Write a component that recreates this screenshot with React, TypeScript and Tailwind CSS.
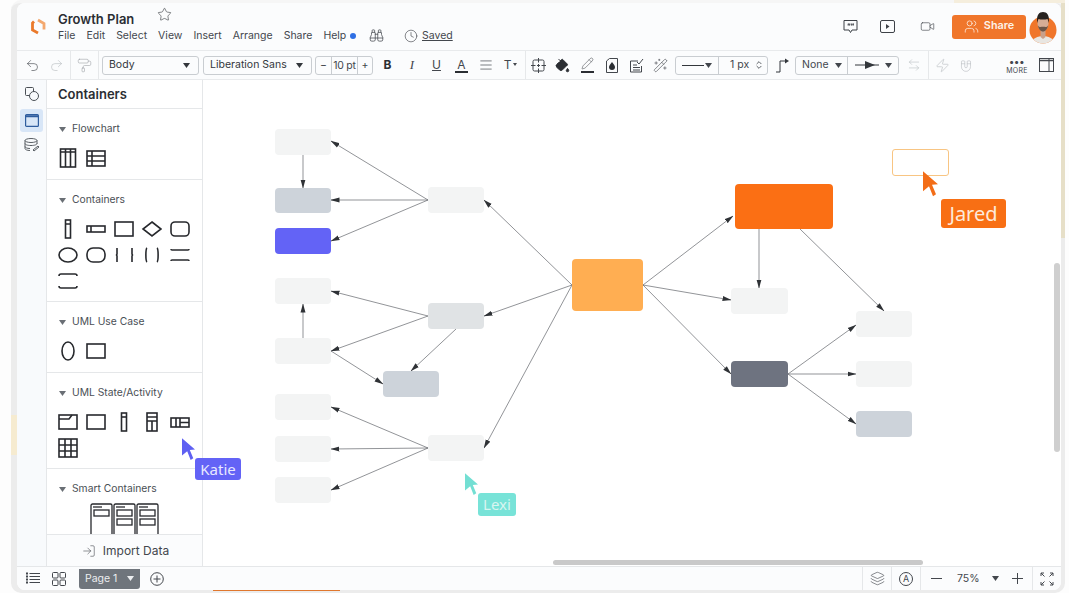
import React from "react";
import {
  Binoculars, Clock, Star, Undo2, Redo2, PaintRoller, AlignJustify, PaintBucket, Pencil, WandSparkles,
  Video, Users, Zap, Magnet, ArrowLeftRight, Layers, ChevronsUpDown, LogIn,
} from "lucide-react";

const Caret = ({ className = "" }: { className?: string }) => (
  <svg width="7" height="5" viewBox="0 0 7 5" className={className}><path d="M0 0h7L3.500 5z" fill="currentColor" /></svg>
);

const S = ({ children }: { children: React.ReactNode }) => (
  <svg width="24" height="24" viewBox="0 0 24 24" fill="none" stroke="#27292d" strokeWidth="1.600">{children}</svg>
);

const shapes: Record<string, React.ReactNode> = {
  swim: <><rect x="4.500" y="3" width="15" height="18" /><path d="M4.500 6h15M9.500 3v18M14.500 3v18" /></>,
  swimH: <><rect x="3" y="5" width="18" height="15" /><path d="M3 10h18M3 15h18M8 5v15" /></>,
  tall: <><rect x="9.500" y="3" width="5" height="18" /><path d="M9.500 7h5" /></>,
  wide: <><rect x="3" y="9" width="18" height="6" /><path d="M7 9v6" /></>,
  rect: <rect x="3" y="5" width="18" height="14" />,
  diamond: <path d="M12 5l9 7-9 7-9-7z" />,
  round: <rect x="3" y="5" width="18" height="14" rx="4" />,
  oval: <ellipse cx="12" cy="12" rx="9" ry="7" />,
  pill: <rect x="3" y="5" width="18" height="14" rx="6" />,
  brk: <path d="M5 5v6l-.500 1 .500 1v6M20 5v6l.500 1-.500 1v6" />,
  paren: <path d="M7 5c-1.500 1-1.500 13 0 14M17 5c1.500 1 1.500 13 0 14" />,
  hbar: <path d="M3 6c0 1 0 1 1 1h16c1 0 1 0 1-1M3 18c0-1 0-1 1-1h16c1 0 1 0 1 1" />,
  hcurve: <path d="M3 7c0-2 1-2 2-2h14c1 0 2 0 2 2M3 17c0 2 1 2 2 2h14c1 0 2 0 2-2" />,
  ellipseV: <ellipse cx="12" cy="12" rx="6" ry="9" />,
  frame: <><rect x="3" y="5" width="18" height="14" /><path d="M3 9h10l3-4" /></>,
  tallT: <><rect x="7" y="3" width="10" height="18" /><path d="M7 7h10M7 11h10M12 11v10" /></>,
  wideT: <><rect x="3" y="8" width="18" height="9" /><path d="M8 8v9M12 8v9M12 12.500h9" /></>,
  grid: <><rect x="3" y="3" width="18" height="18" /><path d="M3 9h18M3 15h18M9 3v18M15 3v18" /></>,
};

const Section = ({ title, icons, h }: { title: string; icons?: string[]; h: string }) => (
  <div className={`${h} shrink-0 border-b border-[#e5e7e9] pl-[10px] pt-[13px]`}>
    <div className="flex h-[14px] items-center gap-[6px] pl-[2px] text-[10.300px] text-[#4a4f55]">
      <Caret className="text-[#6a6f75]" />
      <span>{title}</span>
    </div>
    {icons && (
      <div className="-ml-[3px] mt-[9px] grid auto-rows-[26px] grid-cols-[repeat(5,28px)] place-items-center">
        {icons.map((k, i) => <S key={i}>{shapes[k]}</S>)}
      </div>
    )}
  </div>
);

const Sel = ({ w, children }: { w: string; children: React.ReactNode }) => (
  <div className={`${w} flex h-[19px] items-center justify-between rounded-[3px] border border-[#c9cdd1] pl-[6px] pr-[8px] text-[10.500px] text-[#33373c]`}>
    {children}
  </div>
);

const Vr = () => <div className="h-full w-px bg-[#e6e8ea]" />;

const nodes: [number, number, number, number, string][] = [
  [275, 129, 56, 26, "#f3f4f4"], [275, 188, 56, 25, "#cdd3da"], [275, 228, 56, 26, "#6363f6"],
  [428, 187, 56, 26, "#f3f4f4"], [275, 278, 56, 26, "#f3f4f4"], [275, 338, 56, 26, "#f3f4f4"],
  [428, 303, 56, 26, "#e0e3e5"], [383, 371, 56, 26, "#cdd3da"], [275, 394, 56, 26, "#f3f4f4"],
  [275, 436, 56, 26, "#f3f4f4"], [275, 477, 56, 26, "#f3f4f4"], [428, 435, 56, 26, "#f3f4f4"],
  [572, 259, 71, 52, "#ffae52"], [735, 184, 98, 45, "#fb6f14"], [731, 288, 57, 26, "#f3f4f4"],
  [731, 361, 57, 26, "#6e7380"], [856, 311, 56, 26, "#f3f4f4"], [856, 361, 56, 26, "#f3f4f4"],
  [856, 411, 56, 26, "#cdd3da"],
];

const edges = [
  [572, 285, 484, 200], [572, 285, 484, 316], [572, 285, 484, 448],
  [428, 200, 331, 141], [428, 200, 331, 200], [428, 200, 331, 241],
  [303, 155, 303, 188], [428, 316, 331, 291], [428, 316, 331, 351], [456, 329, 411, 371],
  [303, 338, 303, 304], [331, 351, 383, 384],
  [428, 448, 331, 407], [428, 448, 331, 449], [428, 448, 331, 490],
  [643, 285, 733, 216], [643, 285, 731, 300], [643, 285, 731, 374],
  [759, 229, 759, 288], [800, 229, 884, 311],
  [788, 374, 856, 325], [788, 374, 856, 374], [788, 374, 856, 424],
];

const Cursor = ({ color, x, y, w = 13 }: { color: string; x: number; y: number; w?: number }) => (
  <svg className="absolute" style={{ left: x - 203, top: y - 80 }} width={w} height={w * 1.7} viewBox="0 0 15 25">
    <path d="M0 0l15 13-6 .500 4 9.500-3 2-4-10-6 5z" fill={color} />
  </svg>
);

export default function App() {
  return (
    <div className="relative h-[593px] w-[1069px] overflow-hidden bg-[#fdfdfd] font-['Inter',sans-serif]">
      <div className="ml-[11px] h-[593px] w-[1054px] rounded-[10px] border-t-[3px] border-[#f6f6f6] bg-[#ececec] pb-[3px] pl-[6px] pr-[4px]">
        <div className="relative z-10 flex h-[587px] w-[1044px] flex-col overflow-hidden rounded-[8px] bg-white">
          {/* header */}
          <div className="flex h-[47px] shrink-0 items-center bg-[#fbfcfd] pr-[3px]">
            <svg width="17" height="17" viewBox="0 0 17 17" className="ml-[13px]" fill="none" strokeWidth="2.800">
              <path d="M4 3.500L2.500 5v7l5.500 3" stroke="#ea7a2c" /><path d="M8 2l6 3.500v6" stroke="#f3a86e" />
            </svg>
            <div className="ml-[11px] w-[239px]">
              <div className="flex items-start text-[13px] font-semibold leading-[16px] text-[#2b2e33]">
                Growth Plan
                <Star size={15} strokeWidth={1} className="-mt-[4px] ml-[23px] text-[#3a3d42]" />
              </div>
              <div className="mt-[2px] flex items-center gap-[11px] text-[10.500px] leading-[14px] text-[#43474d]">
                {["File", "Edit", "Select", "View", "Insert", "Arrange", "Share"].map((t) => <span key={t}>{t}</span>)}
                <span className="flex items-center gap-[4px]">Help<span className="h-[6px] w-[6px] rounded-full bg-[#2f6fe4]" /></span>
              </div>
            </div>
            <div className="ml-[72px] mt-[18px] flex items-center text-[#43474d]">
              <Binoculars size={15} strokeWidth={1.200} />
              <Clock size={14} strokeWidth={1.100} className="ml-[20px]" />
              <span className="ml-[4px] text-[10.500px] underline">Saved</span>
            </div>
            <div className="ml-auto flex items-center">
              <svg width="15" height="15" viewBox="0 0 15 15" fill="none" stroke="#3d4147"><path d="M1 1.500h13v9.500H9l-1.500 2.500L6 11H1z" strokeLinejoin="round" /><path d="M5.500 4.500l-.500 2M7 4.500l-.500 2M9 4.500l-.500 2M10.500 4.500l-.500 2" strokeWidth="1.100" /></svg>
              <svg width="15" height="13" viewBox="0 0 15 13" className="ml-[22px]" fill="none" stroke="#3d4147"><rect x="0.500" y="0.500" width="14" height="12" rx="1.500" /><path d="M6 4l3.500 2.500L6 9z" fill="#3d4147" stroke="none" /></svg>
              <Video size={15} strokeWidth={1} className="ml-[25px] text-[#3d4147]" />
              <div className="ml-[17px] flex h-[24px] w-[74px] items-center justify-center gap-[5px] rounded-[3px] bg-[#f0762b] text-[10.800px] font-semibold text-[#fdf3ea]">
                <Users size={15} strokeWidth={1.200} />Share
              </div>
              <svg width="30" height="38" viewBox="0 0 30 38" className="ml-[2px]">
                <defs><clipPath id="av"><circle cx="15" cy="22" r="13.500" /></clipPath></defs>
                <circle cx="15" cy="22" r="13.500" fill="#f0762b" />
                <path clipPath="url(#av)" d="M1 38c1-7 9-10 14-10s13 3 14 10z" fill="#e8e6e2" />
                <path d="M12.500 22h5v7l-2.500 2-2.500-2z" fill="#c9a08a" />
                <ellipse cx="15" cy="15.500" rx="5.500" ry="7.500" fill="#d6ad96" />
                <path d="M9.300 15c-1.300-8 2-11 5.700-11s7 3 5.700 11l-1-4c-3 .700-6.500.700-9.400 0z" fill="#26221f" />
                <path d="M9.800 17c.700 4 2.700 6.500 5.200 6.500s4.500-2.500 5.200-6.500c-.500 1.500-1.500 2-2.500 2-1.500-.500-3.900-.500-5.400 0-1 0-2-.500-2.500-2z" fill="#6b5548" />
              </svg>
            </div>
          </div>
          {/* toolbar */}
          <div className="flex h-[30px] shrink-0 items-center border-y border-[#e8eaec] bg-[#fbfcfd] text-[#43474d]">
            <div className="flex h-full w-[54px] items-center justify-center gap-[9px] border-r border-[#e6e8ea] pl-[2px]">
              <Undo2 size={15} strokeWidth={1} /><Redo2 size={15} strokeWidth={1} className="text-[#b9bdc1]" />
            </div>
            <div className="flex h-full w-[27px] items-center justify-center"><PaintRoller size={15} strokeWidth={1} className="text-[#a3a7ab]" /></div>
            <Vr />
            <Sel w="ml-[3px] w-[97px]"><span>Body</span><Caret /></Sel>
            <Sel w="ml-[4px] w-[109px]"><span>Liberation Sans</span><Caret /></Sel>
            <div className="ml-[3px] flex h-[19px] w-[58px] items-center rounded-[3px] border border-[#c9cdd1] text-[10.500px]">
              <span className="w-[15px] text-center">−</span>
              <span className="flex-1 border-x border-[#c9cdd1] text-center leading-[17px] tracking-tight">10 pt</span>
              <span className="w-[14px] text-center">+</span>
            </div>
            <div className="ml-[2px] flex items-center">
              <span className="flex w-[25px] justify-center text-[12px] font-bold text-[#2b2e33]">B</span>
              <span className="flex w-[24px] justify-center font-['Liberation_Serif',serif] text-[13px] italic">I</span>
              <span className="flex w-[25px] justify-center text-[12px] underline">U</span>
              <span className="flex w-[25px] flex-col items-center text-[12px] leading-[13px]">A<span className="h-[2px] w-[13px] bg-[#2b2e33]" /></span>
              <span className="flex w-[24px] justify-center"><AlignJustify size={14} strokeWidth={1.200} /></span>
              <span className="flex w-[25px] items-center justify-center gap-[2px] text-[12px]">T<Caret className="mt-[-2px] w-[4px]" /></span>
            </div>
            <div className="ml-[2px] h-full"><Vr /></div>
            <div className="flex items-center">
              <span className="flex w-[24px] justify-center">
                <svg width="15" height="15" viewBox="0 0 15 15" fill="none" stroke="#43474d" strokeWidth="1"><rect x="2" y="2" width="11" height="11" rx="1.500" /><path d="M7.500 0v4.500M7.500 10.500V15M0 7.500h4.500M10.500 7.500H15M6 7.500h3M7.500 6v3" /></svg>
              </span>
              <span className="flex w-[25px] justify-center"><PaintBucket size={15} strokeWidth={1.500} fill="#2b2e33" className="text-[#2b2e33]" /></span>
              <span className="flex w-[24px] flex-col items-center"><Pencil size={13} strokeWidth={1} /><span className="mt-[1px] h-[2px] w-[13px] bg-[#2b2e33]" /></span>
              <span className="flex w-[25px] justify-center">
                <svg width="12" height="15" viewBox="0 0 12 15" fill="none" stroke="#43474d"><path d="M.500 3l3-2.500h8v14H.500z" /><path d="M6 4c2 2.500 3 4 3 5a3 3 0 0 1-6 0c0-1 1-2.500 3-5z" fill="#2b2e33" stroke="none" /></svg>
              </span>
              <span className="flex w-[24px] justify-center">
                <svg width="15" height="15" viewBox="0 0 15 15" fill="none" stroke="#43474d" strokeWidth="1"><path d="M9 3H1.500v11h11V8M4 7h4M4 9.500h7M4 12h7" /><path d="M8 4l2 2 4-5" /></svg>
              </span>
              <span className="flex w-[24px] justify-center"><WandSparkles size={15} strokeWidth={1} /></span>
            </div>
            <div className="ml-[3px] flex h-[19px] w-[93px] items-center rounded-[3px] border border-[#c9cdd1] text-[10.500px]">
              <div className="flex h-full w-[43px] items-center justify-between border-r border-[#c9cdd1] px-[6px]"><span className="h-px w-[22px] bg-[#33373c]" /><Caret /></div>
              <span className="ml-[11px]">1 px</span>
              <ChevronsUpDown size={10} className="ml-auto mr-[3px]" />
            </div>
            <svg width="14" height="15" viewBox="0 0 14 15" className="ml-[8px]" fill="none" stroke="#33373c"><path d="M0 14h4V3h6" /><path d="M9 .500l4 2.500-4 2.500z" fill="#33373c" stroke="none" /></svg>
            <div className="ml-[5px] flex h-[19px] w-[104px] items-center rounded-[3px] border border-[#c9cdd1] text-[10.500px]">
              <div className="flex h-full w-[52px] items-center justify-between border-r border-[#c9cdd1] pl-[6px] pr-[5px]">None<Caret /></div>
              <svg width="24" height="8" viewBox="0 0 24 8" className="ml-[7px]"><path d="M0 4h24" stroke="#33373c" /><path d="M10 0l10 4-10 4z" fill="#33373c" /></svg>
              <Caret className="ml-auto mr-[6px]" />
            </div>
            <ArrowLeftRight size={14} strokeWidth={1} className="ml-[8px] text-[#b9bdc1]" />
            <div className="ml-[7px] h-full"><Vr /></div>
            <Zap size={15} strokeWidth={1} className="ml-[6px] text-[#b9bdc1]" />
            <Magnet size={14} strokeWidth={1} className="ml-[9px] rotate-[135deg] text-[#b9bdc1]" />
            <div className="ml-[31px] flex w-[26px] flex-col items-center">
              <span className="text-[10px] font-bold leading-[10px] tracking-[0.5px]">•••</span>
              <span className="text-[7px] leading-[9px] tracking-[0.3px]">MORE</span>
            </div>
            <svg width="15" height="14" viewBox="0 0 15 14" className="ml-[9px]" fill="none" stroke="#43474d"><rect x="0.500" y="0.500" width="14" height="13" /><path d="M10 0.500v13" strokeWidth="1" /><path d="M0.500 2.500h14" strokeWidth="1.500" /></svg>
          </div>
          {/* main */}
          <div className="flex min-h-0 flex-1">
            <div className="flex w-[30px] shrink-0 flex-col items-center border-r border-[#e5e7e9] bg-[#f8fafc] pt-[6px]">
              <svg width="16" height="16" viewBox="0 0 16 16" fill="none" stroke="#4b5056" strokeWidth="1"><rect x="1.500" y="1.500" width="8" height="8" rx="1" /><circle cx="10" cy="10" r="4.500" fill="#f8fafc" /></svg>
              <div className="mt-[7px] flex h-[23px] w-[23px] items-center justify-center rounded-[3px] bg-[#d8e6f7]">
                <svg width="14" height="13" viewBox="0 0 14 13" fill="none"><rect x="0.600" y="0.600" width="12.800" height="11.800" rx="1" stroke="#2f5d9e" strokeWidth="1.200" /><path d="M1 2.200h12" stroke="#2f5d9e" strokeWidth="2" /></svg>
              </div>
              <svg width="16" height="15" viewBox="0 0 16 15" className="mt-[6px]" fill="none" stroke="#5a5f65" strokeWidth="1"><ellipse cx="7" cy="2.500" rx="6" ry="2" /><path d="M1 2.500v8c0 1 2 2 5 2M13 2.500V6M1 5.500c0 1 2 2 6 2s6-1 6-2M1 8.500c0 1 2 2 5 2" /><path d="M9 12l5-4 1 1-5 4z" /></svg>
            </div>
            <div className="flex w-[156px] shrink-0 flex-col border-r border-[#e5e7e9] bg-white">
              <div className="flex h-[29px] shrink-0 items-center border-b border-[#e5e7e9] pl-[11px] pt-[2px] text-[13px] font-semibold text-[#2b2e33]">Containers</div>
              <Section title="Flowchart" h="h-[71px]" icons={["swim", "swimH"]} />
              <Section title="Containers" h="h-[122px]" icons={["tall", "wide", "rect", "diamond", "round", "oval", "pill", "brk", "paren", "hbar", "hcurve"]} />
              <Section title="UML Use Case" h="h-[71px]" icons={["ellipseV", "rect"]} />
              <Section title="UML State/Activity" h="h-[96px]" icons={["frame", "rect", "tall", "tallT", "wideT", "grid"]} />
              <div className="min-h-0 flex-1 overflow-hidden pl-[10px] pt-[13px]">
                <div className="flex h-[14px] items-center gap-[6px] pl-[2px] text-[10.300px] text-[#4a4f55]"><Caret className="text-[#6a6f75]" /><span>Smart Containers</span></div>
                <svg width="72" height="40" viewBox="0 0 72 40" className="ml-[33px] mt-[7px]" fill="none" stroke="#27292d" strokeWidth="1.300">
                  {[0, 23, 46].map((x) => (
                    <g key={x}>
                      <rect x={x + 1} y="1" width="21" height="42" rx="1.500" />
                      <path d={`M${x + 3} 4h9`} />
                      <rect x={x + 4} y="7" width="15" height="6" />
                      {x > 0 && <rect x={x + 4} y="16" width="15" height="6" />}
                    </g>
                  ))}
                </svg>
              </div>
              <div className="flex h-[32px] shrink-0 items-center justify-center gap-[7px] border-t border-[#e5e7e9] bg-[#fbfcfd] pl-[2px] text-[12px] text-[#43474d]">
                <LogIn size={14} strokeWidth={1} />Import Data
              </div>
            </div>
            {/* canvas */}
            <div className="relative min-w-0 flex-1 bg-white">
              <svg className="absolute inset-0" width="858" height="487" viewBox="203 80 858 487">
                <defs>
                  <marker id="a" markerWidth="9" markerHeight="6" refX="8.500" refY="3" orient="auto" markerUnits="userSpaceOnUse">
                    <path d="M0 0.500L9 3L0 5.500z" fill="#2f3236" />
                  </marker>
                </defs>
                {edges.map((e, i) => (
                  <line key={i} x1={e[0]} y1={e[1]} x2={e[2]} y2={e[3]} stroke="#63666b" strokeWidth="0.700" markerEnd="url(#a)" />
                ))}
              </svg>
              {nodes.map(([x, y, w, h, c], i) => (
                <div key={i} className="absolute rounded-[4px]" style={{ left: x - 203, top: y - 80, width: w, height: h, background: c }} />
              ))}
              <div className="absolute left-[689px] top-[69px] h-[27px] w-[57px] rounded-[3px] border-[1.500px] border-[#f8c583]" />
              <Cursor color="#f36d17" x={923} y={171} w={15} />
              <div className="absolute left-[738px] top-[119px] flex h-[29px] w-[65px] items-center justify-center rounded-[3px] bg-[#f86f14] font-['Noto_Sans',sans-serif] text-[20px] leading-none text-[#fdeadb]">Jared</div>
              <Cursor color="#5f60f2" x={182} y={438} />
              <div className="absolute left-[-8px] top-[378px] flex h-[22px] w-[46px] items-center justify-center rounded-[3px] bg-[#6363f6] font-['Noto_Sans',sans-serif] text-[15px] leading-none text-[#e8e8ff]">Katie</div>
              <Cursor color="#73dfd3" x={465} y={473} />
              <div className="absolute left-[275px] top-[413px] flex h-[23px] w-[38px] items-center justify-center rounded-[3px] bg-[#78e3d8] font-['Noto_Sans',sans-serif] text-[15px] leading-none text-[#d8f5f1]">Lexi</div>
              <div className="absolute bottom-[1px] left-[350px] h-[5px] w-[370px] rounded-full bg-[#c9c9c9]" />
              <div className="absolute right-[1px] top-[183px] h-[189px] w-[6px] rounded-full bg-[#cfcfcf]" />
            </div>
          </div>
          {/* footer */}
          <div className="flex h-[24px] shrink-0 items-center border-t border-[#e5e7e9] bg-[#fbfcfd] text-[#43474d]">
            <svg width="14" height="13" viewBox="0 0 14 13" className="ml-[9px]" fill="none" stroke="#43474d" strokeWidth="1"><path d="M3.500 1.500H14M3.500 4.500H14M3.500 7.500H14M3.500 10.500H14" /><path d="M0 1.500h2M0 4.500h2M0 7.500h2M0 10.500h2" strokeWidth="2" /></svg>
            <svg width="14" height="14" viewBox="0 0 14 14" className="ml-[12px]" fill="none" stroke="#43474d" strokeWidth="1"><rect x="0.500" y="0.500" width="5.500" height="5.500" rx="1" /><rect x="8" y="0.500" width="5.500" height="5.500" rx="1" /><rect x="0.500" y="8" width="5.500" height="5.500" rx="1" /><rect x="8" y="8" width="5.500" height="5.500" rx="1" /></svg>
            <div className="ml-[13px] flex h-[20px] w-[61px] items-center justify-between rounded-b-[3px] bg-[#6f757c] px-[6px] text-[10.500px] text-[#eceef0]">Page 1<Caret /></div>
            <svg width="14" height="14" viewBox="0 0 14 14" className="ml-[10px]" fill="none" stroke="#43474d" strokeWidth="1"><circle cx="7" cy="7" r="6.300" /><path d="M7 3.500v7M3.500 7h7" /></svg>
            <div className="ml-auto flex h-full items-center">
              <div className="flex h-full w-[29px] items-center justify-center border-l border-[#e5e7e9]"><Layers size={15} strokeWidth={1} /></div>
              <div className="flex h-full w-[30px] items-center justify-center border-x border-[#e5e7e9]">
                <span className="flex h-[14px] w-[14px] items-center justify-center rounded-full border border-[#43474d] text-[9px]">A</span>
              </div>
              <div className="flex h-full w-[111px] items-center pl-[10px] text-[10.500px]">
                <span className="h-px w-[11px] bg-[#43474d]" />
                <span className="ml-[15px]">75%</span>
                <Caret className="ml-[12px]" />
                <span className="relative ml-[13px] h-[11px] w-[11px]"><span className="absolute left-0 top-[5px] h-px w-[11px] bg-[#43474d]" /><span className="absolute left-[5px] top-0 h-[11px] w-px bg-[#43474d]" /></span>
              </div>
              <div className="flex h-full w-[29px] items-center justify-center border-l border-[#e5e7e9]">
                <svg width="14" height="14" viewBox="0 0 14 14" fill="none" stroke="#43474d" strokeWidth="1"><path d="M1 4V1h3M1 1l3.500 3.500M13 4V1h-3M13 1L9.500 4.500M1 10v3h3M1 13l3.500-3.500M13 10v3h-3M13 13L9.500 9.500" /></svg>
              </div>
            </div>
          </div>
        </div>
      </div>
      <div className="absolute left-[11px] top-[415px] h-[40px] w-[6px] bg-[#f6ebd0]" />
      <div className="absolute right-[4px] top-0 h-[238px] w-[4px] bg-[#e6dfc8]" />
      <div className="absolute left-[954px] top-0 h-[3px] w-[111px] bg-[#f5eedd]" />
      <div className="absolute left-[213px] top-[590px] h-[1px] w-[127px] bg-[#e0772e]" />
    </div>
  );
}
